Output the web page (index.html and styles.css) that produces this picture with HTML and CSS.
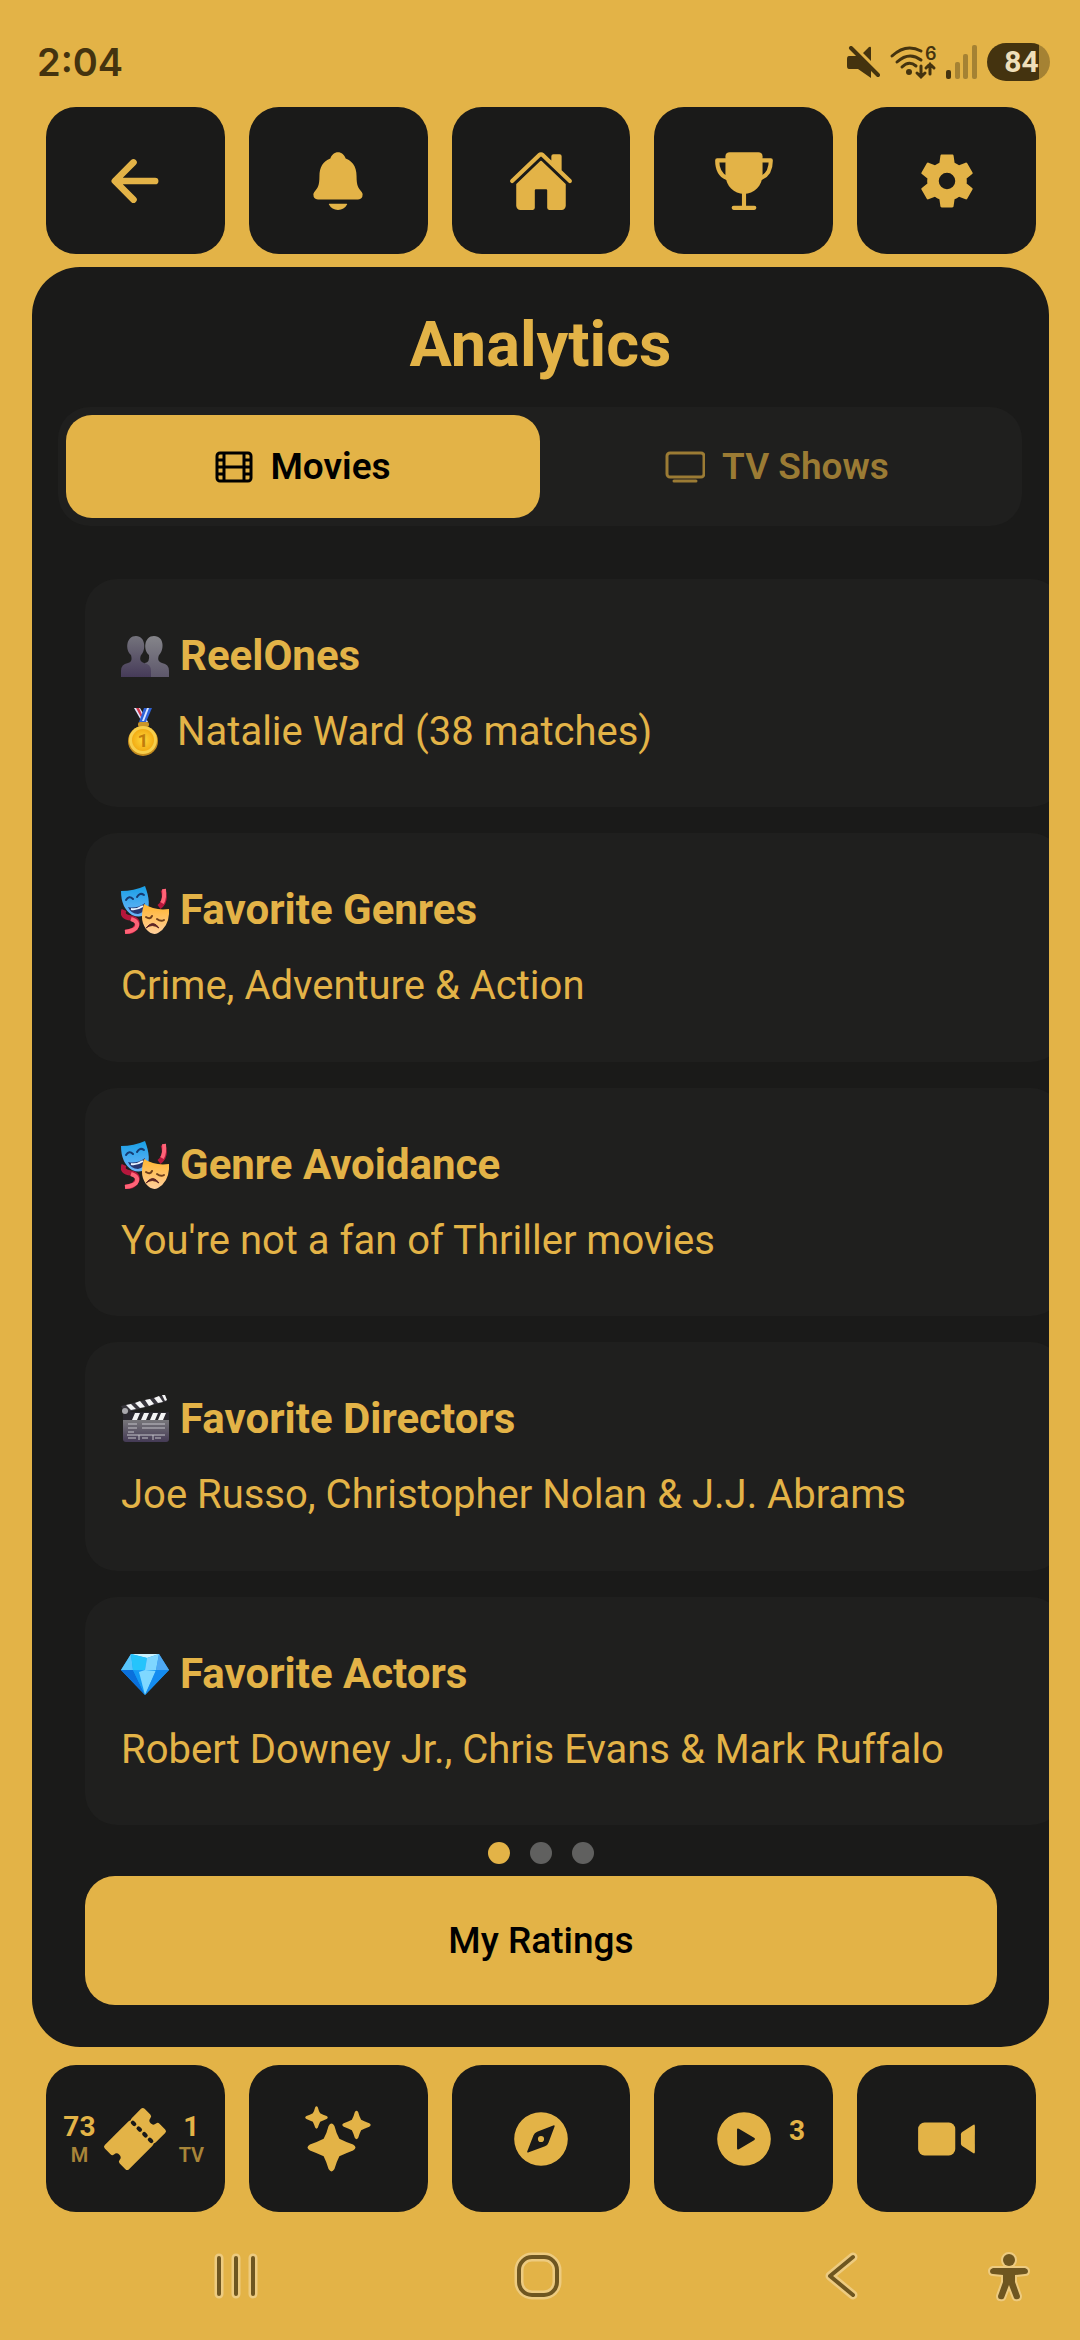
FILE: index.html
```
<!DOCTYPE html>
<html lang="en">
<head>
<meta charset="utf-8">
<meta name="viewport" content="width=device-width, initial-scale=1">
<title>Analytics</title>
<link rel="stylesheet" href="styles.css">
</head>
<body>
<svg class="defs" aria-hidden="true">
  <defs>
    <linearGradient id="bustA" x1="0" y1="0" x2="0" y2="1"><stop offset="0" stop-color="#74737c"/><stop offset="1" stop-color="#463b59"/></linearGradient>
    <linearGradient id="bustB" x1="0" y1="0" x2="0" y2="1"><stop offset="0" stop-color="#85858a"/><stop offset="1" stop-color="#5d576b"/></linearGradient>
    <linearGradient id="blueMask" x1="0" y1="0" x2="0" y2="1"><stop offset="0" stop-color="#189fe6"/><stop offset="1" stop-color="#6db5f8"/></linearGradient>
    <linearGradient id="goldMask" x1="0" y1="0" x2="0" y2="1"><stop offset="0" stop-color="#ffb52e"/><stop offset="1" stop-color="#ffcf9c"/></linearGradient>
    <linearGradient id="slate" x1="0" y1="0" x2="0" y2="1"><stop offset="0" stop-color="#77767a"/><stop offset="1" stop-color="#443a55"/></linearGradient>
    <radialGradient id="coin"><stop offset="0" stop-color="#ffd83a"/><stop offset="1" stop-color="#f2ac14"/></radialGradient>
    <symbol id="masks" viewBox="0 0 48 48">
      <path d="M42 4q4 11-4 17M3 24q-3 7 7 8q9 2 5 9q-3 5-11 5" fill="none" stroke="#b5173c" stroke-width="5"/>
      <path d="M43 3q1 9-2 14M10 33q9 3 5 9q-3 3-11 4" fill="none" stroke="#ff6377" stroke-width="4"/>
      <path d="M0 5Q13 5 24 0Q31 18 25 27Q20 33 11 29Q0 22 0 5z" fill="url(#blueMask)"/>
      <path d="M5 14q3-5 7-1M16 11q3-5 7-2" fill="none" stroke="#163b72" stroke-width="2" stroke-linecap="round"/>
      <path d="M7 21q9 2 17-4q0 10-7 11q-7 0-10-7z" fill="#26366f"/>
      <path d="M10 23q6 1 12-3" fill="none" stroke="#e8f4ff" stroke-width="2"/>
      <path d="M23 18Q34 25 48 23Q49 40 37 47Q31 50 25 43Q18 34 23 18z" fill="url(#goldMask)"/>
      <path d="M25 31q4 3 6-1M36 33q4 3 7 1" fill="none" stroke="#70401c" stroke-width="2" stroke-linecap="round"/>
      <path d="M25 42q7-9 13 0q-7-5-13 0z" fill="#5c2424" stroke="#5c2424" stroke-width="1"/>
    </symbol>
    <symbol id="star" viewBox="-25 -25 50 50">
      <path d="M-3-22Q0-27 3-22Q5-14 8-9Q14-6 22-3Q27 0 22 3Q14 6 8 9Q5 15 3 22Q0 27-3 22Q-5 15-8 9Q-14 6-22 3Q-27 0-22-3Q-14-6-8-9Q-5-14-3-22z"/>
    </symbol>
  </defs>
</svg>

<div class="app">
  <header class="status">
    <time class="clock">2:04</time>
    <div class="indicators">
      <svg width="33" height="32" viewBox="0 0 33 32" role="img" aria-label="Muted"><path d="M2 10h8l14 13v9l-13-9H2q-2 0-2-3v-7q0-3 2-3zM16 7l6-6q2-1 2 1v13z" fill="#44330f"/><path d="M4 2l27 27" stroke="#44330f" stroke-width="4" stroke-linecap="round"/></svg>
      <svg class="wifi" width="46" height="34" viewBox="0 0 46 34" role="img" aria-label="Wi-Fi 6"><g fill="none" stroke="#44330f" stroke-width="3" stroke-linecap="round"><path d="M2 11Q16-2 31 6M7 17q12-11 24-2M12 22q7-7 14-1"/><path d="M31 21v10M27 28l4 4 4-4M40 29V19M36 23l4-4 4 4"/></g><circle cx="19" cy="27" r="3" fill="#44330f"/><text x="35" y="15" font-size="18" font-weight="600" fill="#44330f">6</text></svg>
      <svg width="31" height="34" viewBox="0 0 31 34" role="img" aria-label="Weak signal" fill="#a58233"><rect y="25" width="5" height="9" rx="2" fill="#44330f"/><rect x="9" y="17" width="5" height="17" rx="2"/><rect x="17" y="9" width="5" height="25" rx="2"/><rect x="26" width="5" height="34" rx="2"/></svg>
      <span class="battery">84</span>
    </div>
  </header>

  <nav class="tiles" aria-label="Main">
    <button class="tile" aria-label="Back"><svg class="icon" viewBox="0 0 512 512"><path d="M244 400L100 256l144-144M120 256h292" fill="none" stroke="currentColor" stroke-width="52" stroke-linecap="round" stroke-linejoin="round"/></svg></button>
    <button class="tile" aria-label="Notifications"><svg class="icon" viewBox="0 0 512 512"><path d="M440.08 341.31c-1.66-2-3.29-4-4.89-5.93-22-26.61-35.31-42.67-35.31-118 0-39-9.33-71-27.72-95-13.56-17.73-31.89-31.18-56.05-41.12a3 3 0 01-.82-.67C306.6 51.49 282.82 32 256 32s-50.59 19.49-59.28 48.56a3.13 3.13 0 01-.81.65c-56.38 23.21-83.78 67.74-83.78 136.14 0 75.36-13.29 91.42-35.31 118-1.6 1.93-3.23 3.89-4.89 5.93a35.16 35.16 0 00-4.65 37.62c6.17 13 19.32 21.07 34.33 21.07H410.5c14.94 0 28-8.06 34.19-21a35.17 35.17 0 00-4.61-37.66zM256 480a80.06 80.06 0 0070.44-42.13 4 4 0 00-3.54-5.87H189.12a4 4 0 00-3.55 5.87A80.06 80.06 0 00256 480z"/></svg></button>
    <button class="tile" aria-label="Home"><svg class="icon" viewBox="0 0 512 512"><path d="M261.56 101.28a8 8 0 00-11.06 0L66.4 277.15a8 8 0 00-2.47 5.79L63.9 448a32 32 0 0032 32H192a16 16 0 0016-16V328a8 8 0 018-8h80a8 8 0 018 8v136a16 16 0 0016 16h96.06a32 32 0 0032-32V282.94a8 8 0 00-2.47-5.79z"/><path d="M490.91 244.15l-74.8-71.56V64a16 16 0 00-16-16h-48a16 16 0 00-16 16v32l-57.92-55.38C272.77 35.14 264.71 32 256 32c-8.68 0-16.72 3.14-22.14 8.63l-212.7 203.5c-6.22 6-7 15.87-1.34 22.37A16 16 0 0043 267.56L250.5 69.28a8 8 0 0111.06 0l207.52 198.28a16 16 0 0022.59-.44c6.14-6.36 5.63-16.86-.76-22.97z"/></svg></button>
    <button class="tile" aria-label="Trophies"><svg class="icon" viewBox="0 0 512 512"><path d="M144 32h224a32 32 0 0132 32v140c0 92-68 152-144 152S112 296 112 204V64a32 32 0 0132-32z"/><path d="M400 96h64c0 64-24 114-74 136M112 96H48c0 64 24 114 74 136M256 340v118M176 464h160" fill="none" stroke="currentColor" stroke-width="32" stroke-linecap="round" stroke-linejoin="round"/></svg></button>
    <button class="tile" aria-label="Settings"><svg class="icon" viewBox="0 0 24 24"><path fill-rule="evenodd" d="M19.14 12.94c.04-.3.06-.61.06-.94 0-.32-.02-.64-.07-.94l2.03-1.58c.18-.14.23-.41.12-.61l-1.92-3.32c-.12-.22-.37-.29-.59-.22l-2.39.96c-.5-.38-1.03-.7-1.62-.94l-.36-2.54c-.04-.24-.24-.41-.48-.41h-3.84c-.24 0-.43.17-.47.41l-.36 2.54c-.59.24-1.13.57-1.62.94l-2.39-.96c-.22-.08-.47 0-.59.22L2.74 8.87c-.12.21-.08.47.12.61l2.03 1.58c-.05.3-.09.63-.09.94s.02.64.07.94l-2.03 1.58c-.18.14-.23.41-.12.61l1.92 3.32c.12.22.37.29.59.22l2.39-.96c.5.38 1.03.7 1.62.94l.36 2.54c.05.24.24.41.48.41h3.84c.24 0 .44-.17.47-.41l.36-2.54c.59-.24 1.13-.56 1.62-.94l2.39.96c.22.08.47 0 .59-.22l1.92-3.32c.12-.22.07-.47-.12-.61zM12 15a3 3 0 110-6 3 3 0 010 6z"/></svg></button>
  </nav>

  <main class="panel">
    <h1 class="title">Analytics</h1>
    <div class="tabs" role="tablist">
      <button class="tab tab-active" role="tab" aria-selected="true">
        <svg width="38" height="32" viewBox="0 0 38 32" fill="none" stroke="currentColor" stroke-width="3" aria-hidden="true"><rect x="2" y="2" width="34" height="28" rx="3"/><path d="M9 2v28M29 2v28M9 16h20M2 9h7M2 16h7M2 23h7M29 9h7M29 16h7M29 23h7"/></svg>
        Movies
      </button>
      <button class="tab" role="tab" aria-selected="false">
        <svg width="40" height="32" viewBox="0 0 40 32" fill="none" stroke="currentColor" stroke-width="3" aria-hidden="true"><rect x="2" y="2" width="37" height="24" rx="3"/><path d="M9 30h22" stroke-linecap="round"/></svg>
        TV Shows
      </button>
    </div>

    <div class="cards">
      <section class="card">
        <h2 class="card-title"><svg class="emoji" viewBox="0 0 48 48" aria-hidden="true"><path d="M33 4c11 0 10 15 5 19-2 5 0 7 3 8q7 1 7 8v6H24V31q5-1 4-8c-6-5-5-19 5-19z" fill="url(#bustB)"/><path d="M15 4c10 0 10 15 5 19-2 5 0 7 3 8q7 1 7 8v6H0v-6q0-7 7-8c4-1 4-4 3-8C4 18 5 4 15 4z" fill="url(#bustA)"/></svg>ReelOnes</h2>
        <p class="card-text"><svg class="emoji medal" viewBox="0 0 45 48" aria-hidden="true"><path d="M13 0h6l8 14h-6z" fill="#dfe6ff"/><path d="M15 0h3l6 13h-2z" fill="#d23a4c"/><path d="M31 0h-8l-5 14h7z" fill="#2e62d6"/><path d="M28 0h-2l-5 13h2z" fill="#dbe6ff"/><rect x="17" y="14" width="11" height="5" rx="2" fill="#c9952a"/><ellipse cx="22" cy="33" rx="15" ry="15" fill="#c58c1f"/><ellipse cx="22" cy="32" rx="14" ry="14" fill="#f6ce4b"/><circle cx="22" cy="32" r="11" fill="url(#coin)"/><text x="22" y="39" font-size="19" font-weight="700" text-anchor="middle" fill="#c07c0c">1</text></svg>Natalie Ward (38 matches)</p>
      </section>
      <section class="card">
        <h2 class="card-title"><svg class="emoji" aria-hidden="true"><use href="#masks"/></svg>Favorite Genres</h2>
        <p class="card-text">Crime, Adventure &amp; Action</p>
      </section>
      <section class="card">
        <h2 class="card-title"><svg class="emoji" aria-hidden="true"><use href="#masks"/></svg>Genre Avoidance</h2>
        <p class="card-text">You're not a fan of Thriller movies</p>
      </section>
      <section class="card">
        <h2 class="card-title"><svg class="emoji" viewBox="0 0 48 48" aria-hidden="true"><path d="M2 17h46v10H2z" fill="#2b2930"/><path d="M2 25h46v19q0 3-3 3H5q-3 0-3-3z" fill="url(#slate)"/><path d="M0 11L44 0l2 6L4 18z" fill="#38363d"/><path d="M5 10l5-1 5 5-5 1zM14 8l5-2 5 6-5 1zM24 5l5-1 4 5-5 2zM33 3l5-2 4 6-5 1zM41 0l3 0 2 5-2 1zM14 18h5l-3 7h-5zM23 18h5l-3 7h-5zM32 18h5l-3 7h-5zM40 18h5l-3 7h-5z" fill="#f4f4f5"/><circle cx="4" cy="16" r="3" fill="#a9a8ad"/><path d="M7 29h9M21 29h23M7 33h9M21 33h23M7 37h6M6 40h38M18 40v5M32 40v5M7 43h8M21 43h6M34 43h6" stroke="#c3c2c8" stroke-width="1" fill="none"/></svg>Favorite Directors</h2>
        <p class="card-text">Joe Russo, Christopher Nolan &amp; J.J. Abrams</p>
      </section>
      <section class="card">
        <h2 class="card-title"><svg class="emoji" viewBox="0 0 48 48" aria-hidden="true"><path d="M0 20L10 4h28l10 16-24 25z" fill="#1b9df5"/><path d="M10 4h28L26 8z" fill="#c9f3ff"/><path d="M10 4L0 20l12 0z" fill="#59c6fb"/><path d="M10 4l2 16h12l2-12z" fill="#25c4fb"/><path d="M26 8l12-4-3 16H24z" fill="#7fd6ff"/><path d="M38 4l10 16H35z" fill="#4fa8f2"/><path d="M0 20h12l12 25z" fill="#0a70dc"/><path d="M12 20l6 2 6 23z" fill="#129af4"/><path d="M18 22l6-2 11 1-11 24z" fill="#7fd8ff"/><path d="M35 20h13L24 45z" fill="#148cf0"/></svg>Favorite Actors</h2>
        <p class="card-text">Robert Downey Jr., Chris Evans &amp; Mark Ruffalo</p>
      </section>
    </div>

    <div class="dots" aria-label="Page 1 of 3" role="img"><i class="dot dot-on"></i><i class="dot"></i><i class="dot"></i></div>
    <button class="ratings">My Ratings</button>
  </main>

  <nav class="tiles tiles-bottom" aria-label="Sections">
    <button class="tile">
      <span class="count"><b>73</b><small>M</small></span>
      <svg class="icon" viewBox="0 0 512 512" aria-hidden="true"><path d="M490.18 181.4l-44.13-44.13a20 20 0 00-27-1 30.81 30.81 0 01-41.68-1.6A30.81 30.81 0 01375.77 93a20 20 0 00-1-27L330.6 21.82a19.91 19.91 0 00-28.13 0l-70.35 70.35a39.87 39.87 0 00-9.57 15.5 7.71 7.71 0 01-4.83 4.83 39.78 39.78 0 00-15.5 9.58L21.82 302.47a19.91 19.91 0 000 28.13L66 374.73a20 20 0 0027 1 30.69 30.69 0 0143.28 43.28 20 20 0 001 27l44.13 44.13a19.91 19.91 0 0028.13 0l180.4-180.4a39.82 39.82 0 009.58-15.49 7.69 7.69 0 014.84-4.84 39.84 39.84 0 0015.49-9.57l70.35-70.35a19.91 19.91 0 00-.02-28.09zm-228.37-29.65a16 16 0 01-22.63 0l-11.51-11.51a16 16 0 0122.63-22.62l11.51 11.5a16 16 0 010 22.63zm44 44a16 16 0 01-22.62 0l-11-11a16 16 0 1122.63-22.63l11 11a16 16 0 01.01 22.66zm44 44a16 16 0 01-22.63 0l-11-11a16 16 0 0122.63-22.62l11 11a16 16 0 01.02 22.66zm44.05 44.04a16 16 0 01-22.63 0l-11.51-11.51a16 16 0 1122.63-22.62l11.51 11.5a16 16 0 010 22.63z"/></svg>
      <span class="count"><b>1</b><small>TV</small></span>
    </button>
    <button class="tile" aria-label="Recommendations"><svg class="icon" viewBox="0 0 66 66"><use href="#star" x="2" y="17" width="49" height="49"/><use href="#star" x="0" y="0" width="23" height="23"/><use href="#star" x="37" y="4" width="29" height="30"/></svg></button>
    <button class="tile" aria-label="Discover"><svg class="icon" viewBox="0 0 512 512"><path fill-rule="evenodd" d="M256 48a208 208 0 100 416 208 208 0 000-416zM356 150L226 199q-21 8-28 27L149 353q-2 9 7 7l131-47q21-8 27-27l48-129q0-8-6-7zM256 232a24 24 0 110 48 24 24 0 010-48z"/></svg></button>
    <button class="tile" aria-label="Watching, 3"><svg class="icon" viewBox="0 0 512 512"><path fill-rule="evenodd" d="M256 48a208 208 0 100 416 208 208 0 000-416zM216 177q-14-8-14 8v142q0 16 14 8l118-70q14-9 0-18z"/></svg><b class="badge">3</b></button>
    <button class="tile" aria-label="Videos"><svg class="icon" viewBox="0 0 512 512"><rect x="32" y="128" width="288" height="256" rx="50"/><path d="M458 147L374 201q-10 7-10 18v74q0 11 10 18l84 54q14 8 14-8V155q0-16-14-8z"/></svg></button>
  </nav>

  <footer class="system">
    <button class="key" aria-label="Recent apps"><svg width="50" height="50" viewBox="0 0 50 50"><path class="halo" d="M8 7v36M25 7v36M42 7v36"/><path class="line" d="M8 7v36M25 7v36M42 7v36"/></svg></button>
    <button class="key" aria-label="Home screen"><svg width="50" height="50" viewBox="0 0 50 50"><rect class="halo" x="6" y="6" width="38" height="38" rx="13"/><rect class="line" x="6" y="6" width="38" height="38" rx="13"/></svg></button>
    <button class="key" aria-label="System back"><svg width="50" height="50" viewBox="0 0 50 50"><path class="halo" d="M38 6L15 25l23 19"/><path class="line" d="M38 6L15 25l23 19"/></svg></button>
    <button class="key" aria-label="Accessibility"><svg width="46" height="52" viewBox="0 0 46 52"><g id="person"><circle cx="23" cy="10" r="6"/><path d="M7 18h32q3 1 3 3 0 3-3 3l-10 1v7l5 14q0 3-2 3-3 1-4-1l-5-13-5 13q-1 2-4 1-2 0-2-3l5-14v-7L7 24q-3 0-3-3 0-2 3-3z"/></g></svg></button>
  </footer>
</div>
</body>
</html>
```
FILE: styles.css
```
:root {
  --gold: #e3b347;
  --ink: #1a1a19;
  --card: #1f1f1e;
  --brown: #44330f;
  --key: #6e5620;
  --halo: #edcb80;
}

* { box-sizing: border-box; }

body {
  margin: 0;
  background: var(--gold);
  color: var(--gold);
  font-family: Roboto, "Liberation Sans", sans-serif;
}

button {
  margin: 0;
  padding: 0;
  border: 0;
  background: none;
  color: inherit;
  font: inherit;
}

svg { display: block; flex: none; }
.defs { position: absolute; width: 0; height: 0; }

.app {
  display: flex;
  flex-direction: column;
  min-height: 100vh;
}

/* Status bar */
.status {
  display: flex;
  align-items: center;
  justify-content: space-between;
  height: 107px;
  padding: 16px 30px 0 37px;
  color: var(--brown);
}
.clock { font: 600 38px/48px Inter, sans-serif; }
.indicators { display: flex; align-items: center; gap: 10px; }
.wifi { overflow: visible; font-family: Inter, sans-serif; }
.battery {
  width: 63px;
  padding-left: 6px;
  border-radius: 19px;
  background: linear-gradient(90deg, var(--brown) 52px, #a58233 52px);
  color: #efdfba;
  font: 700 30px/38px Roboto, sans-serif;
  text-align: center;
}

/* Icon tiles */
.tiles {
  display: flex;
  gap: 24px;
  padding: 0 44px 0 46px;
}
.tiles-bottom { margin-top: 18px; }
.tile {
  position: relative;
  display: flex;
  flex: 1 1 0;
  align-items: center;
  justify-content: center;
  gap: 6px;
  min-width: 0;
  height: 147px;
  border-radius: 30px;
  background: var(--ink);
}
.icon { width: 66px; height: 66px; fill: currentColor; }
.count {
  display: flex;
  flex-direction: column;
  align-items: center;
  width: 34px;
}
.count b { font-size: 28px; font-weight: 700; line-height: 32px; }
.count small { font-size: 20px; font-weight: 600; line-height: 24px; opacity: 0.7; }
.badge {
  position: absolute;
  top: 50px;
  right: 28px;
  font-size: 28px;
  line-height: 32px;
}

/* Main panel */
.panel {
  display: flex;
  flex: 1;
  flex-direction: column;
  margin: 13px 31px 0 32px;
  padding: 41px 0 42px;
  border-radius: 48px;
  background: var(--ink);
  overflow: hidden;
}
.title {
  margin: 0 0 25px;
  font-size: 63px;
  font-weight: 700;
  line-height: 74px;
  text-align: center;
}
.tabs {
  display: flex;
  margin: 0 27px 0 26px;
  padding: 8px;
  border-radius: 32px;
  background: var(--card);
}
.tab {
  display: flex;
  flex: 1 1 0;
  align-items: center;
  justify-content: center;
  gap: 17px;
  height: 103px;
  border-radius: 26px;
  color: #9b7b34;
  font-size: 37px;
  font-weight: 600;
}
.tab-active { background: var(--gold); color: #000; }

.cards {
  display: flex;
  flex: 1;
  flex-direction: column;
  gap: 26px;
  margin: 53px -14px 17px 53px;
}
.card {
  flex: 1;
  padding: 52px 36px 50px;
  border-radius: 32px;
  background: var(--card);
}
.card-title,
.card-text {
  display: flex;
  align-items: center;
  gap: 11px;
  margin: 0;
  line-height: 50px;
}
.card-title { margin-bottom: 26px; font-size: 42px; font-weight: 700; }
.card-text { font-size: 40px; font-weight: 400; }
.emoji { width: 48px; height: 48px; }
.medal { width: 45px; }

.dots { display: flex; justify-content: center; gap: 20px; }
.dot {
  width: 22px;
  height: 22px;
  border-radius: 50%;
  background: #60605f;
}
.dot-on { background: var(--gold); }
.ratings {
  height: 129px;
  margin: 12px 52px 0 53px;
  border-radius: 30px;
  background: var(--gold);
  color: #000;
  font-size: 37px;
  font-weight: 500;
}

/* System navigation */
.system {
  display: grid;
  grid-template-columns: repeat(3, 1fr) 36px;
  align-items: center;
  justify-items: center;
  height: 128px;
  padding: 0 53px 0 85px;
}
.key path, .key rect { fill: none; stroke-linecap: round; stroke-linejoin: round; }
.key .halo { stroke: var(--halo); stroke-width: 9px; }
.key .line { stroke: var(--key); stroke-width: 4px; }
#person, #person path { fill: var(--key); stroke: var(--halo); stroke-width: 4px; paint-order: stroke; }
```
